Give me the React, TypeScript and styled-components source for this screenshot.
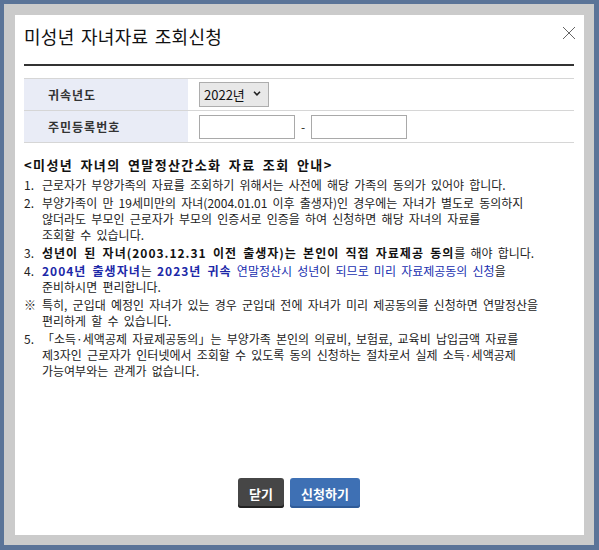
import styled, { createGlobalStyle } from "styled-components";

const GlobalStyle = createGlobalStyle`
    html, body {
        margin: 0;
        height: 100%;
    }
    body {
        background: #5b7498;
        font-family: "Noto Sans CJK KR", "Noto Sans", sans-serif;
        color: #222;
    }
    #root {
        height: 100%;
    }
    * {
        box-sizing: border-box;
    }
`;

const Screen = styled.div`
    height: 100%;
    padding: 4px 5px 5px 4px;
`;

const Frame = styled.div`
    height: 100%;
    background: #cbcbcb;
    padding: 11px 10px 10px 11px;
`;

const Panel = styled.div`
    height: 100%;
    background: #fff;
    display: flex;
    flex-direction: column;
    padding: 0 10px 27px 9px;
`;

const Header = styled.div`
    display: flex;
    align-items: center;
    justify-content: space-between;
    height: 51px;
    padding-bottom: 7px;
    border-bottom: 2px solid #333;
`;

const Title = styled.h1`
    margin: 0;
    font-size: 18px;
    font-weight: 400;
    color: #111;
    letter-spacing: 0.3px;
    word-spacing: 2px;
`;

const CloseButton = styled.button`
    background: none;
    border: none;
    padding: 0;
    margin-right: -2px;
    width: 14px;
    height: 14px;
    cursor: pointer;
    display: flex;
    margin-top: -6px;
`;

const Table = styled.div`
    margin-top: 12px;
    border-top: 1px solid #d6d6d6;
`;

const Row = styled.div`
    display: grid;
    grid-template-columns: 164px 1fr;
    height: 32px;
    border-bottom: 1px solid #d6d6d6;
`;

const Label = styled.div`
    background: #e9ecf6;
    display: flex;
    align-items: center;
    padding-left: 24px;
    font-size: 12px;
    font-weight: 700;
    letter-spacing: 1px;
    color: #333;
`;

const Cell = styled.div`
    display: flex;
    align-items: center;
    gap: 6px;
    padding-left: 11px;
    font-size: 12px;
`;

const SelectBox = styled.div`
    position: relative;
    width: 70px;
    height: 25px;
`;

const Select = styled.select`
    appearance: none;
    width: 100%;
    height: 100%;
    border: 1px solid #adadad;
    background: #e8e8e8;
    font-family: inherit;
    font-size: 13px;
    color: #111;
    padding: 0 0 0 4px;
    border-radius: 0;
`;

const Chevron = styled.span`
    position: absolute;
    right: 8px;
    top: 9px;
    pointer-events: none;
    display: flex;
`;

const Input = styled.input`
    width: 96px;
    height: 24px;
    border: 1px solid #a9a9a9;
    padding: 0 4px;
`;

const Notice = styled.div`
    margin-top: 14px;
    font-size: 12px;
    word-spacing: 2.5px;
`;

const NoticeTitle = styled.div`
    font-size: 13px;
    font-weight: 700;
    letter-spacing: 1.4px;
    word-spacing: 3px;
    color: #111;
    line-height: 16px;
`;

const List = styled.div`
    margin-top: 4px;
`;

const Item = styled.div`
    display: grid;
    grid-template-columns: 18px 1fr;
    line-height: 16px;
    margin-top: 2px;
    color: #222;
`;

const Strong = styled.b<{ $blue?: boolean }>`
    font-weight: 700;
    letter-spacing: 1px;
    color: ${(p) => (p.$blue ? "#1c28a8" : "#111")};
`;

const Blue = styled.span`
    color: #2030b0;
`;

const Footer = styled.div`
    margin-top: auto;
    display: flex;
    justify-content: center;
    gap: 6px;
`;

const Button = styled.button<{ $primary?: boolean }>`
    height: 30px;
    padding: 0 11px;
    border: none;
    border-radius: 3px;
    background: ${(p) => (p.$primary ? "#3e70b4" : "#464646")};
    box-shadow: inset 0 -2px 0 ${(p) => (p.$primary ? "#2f5b98" : "#222")};
    color: #fff;
    font-family: inherit;
    font-size: 13px;
    font-weight: 700;
    cursor: pointer;
`;

export default function App() {
    return (
        <>
            <GlobalStyle/>
            <Screen>
                <Frame>
                    <Panel>
                        <Header>
                            <Title>미성년 자녀자료 조회신청</Title>
                            <CloseButton aria-label="닫기">
                                <svg width="14" height="14" viewBox="0 0 14 14">
                                    <path d="M1 1 L13 13 M13 1 L1 13" stroke="#666" strokeWidth="1"/>
                                </svg>
                            </CloseButton>
                        </Header>

                        <Table>
                            <Row>
                                <Label>귀속년도</Label>
                                <Cell>
                                    <SelectBox>
                                        <Select defaultValue="2022">
                                            <option value="2022">2022년</option>
                                            <option value="2021">2021년</option>
                                        </Select>
                                        <Chevron>
                                            <svg width="8" height="5" viewBox="0 0 8 5">
                                                <path d="M1 0.8 L4 3.8 L7 0.8" stroke="#222" strokeWidth="1.6" fill="none"/>
                                            </svg>
                                        </Chevron>
                                    </SelectBox>
                                </Cell>
                            </Row>
                            <Row>
                                <Label>주민등록번호</Label>
                                <Cell>
                                    <Input/>
                                    -
                                    <Input/>
                                </Cell>
                            </Row>
                        </Table>

                        <Notice>
                            <NoticeTitle>&lt;미성년 자녀의 연말정산간소화 자료 조회 안내&gt;</NoticeTitle>
                            <List>
                                <Item>
                                    <span>1.</span>
                                    <span>근로자가 부양가족의 자료를 조회하기 위해서는 사전에 해당 가족의 동의가 있어야 합니다.</span>
                                </Item>
                                <Item>
                                    <span>2.</span>
                                    <span>부양가족이 만 19세미만의 자녀(2004.01.01 이후 출생자)인 경우에는 자녀가 별도로 동의하지<br/>않더라도 부모인 근로자가 부모의 인증서로 인증을 하여 신청하면 해당 자녀의 자료를<br/>조회할 수 있습니다.</span>
                                </Item>
                                <Item>
                                    <span>3.</span>
                                    <span><Strong>성년이 된 자녀(2003.12.31 이전 출생자)는 본인이 직접 자료제공 동의</Strong>를 해야 합니다.</span>
                                </Item>
                                <Item>
                                    <span>4.</span>
                                    <span><Strong $blue>2004년 출생자녀</Strong>는 <Strong $blue>2023년 귀속</Strong> <Blue>연말정산시 성년</Blue>이 <Blue>되므로 미리 자료제공동의 신청</Blue>을<br/>준비하시면 편리합니다.</span>
                                </Item>
                                <Item>
                                    <span>※</span>
                                    <span>특히, 군입대 예정인 자녀가 있는 경우 군입대 전에 자녀가 미리 제공동의를 신청하면 연말정산을<br/>편리하게 할 수 있습니다.</span>
                                </Item>
                                <Item>
                                    <span>5.</span>
                                    <span>「소득·세액공제 자료제공동의」는 부양가족 본인의 의료비, 보험료, 교육비 납입금액 자료를<br/>제3자인 근로자가 인터넷에서 조회할 수 있도록 동의 신청하는 절차로서 실제 소득·세액공제<br/>가능여부와는 관계가 없습니다.</span>
                                </Item>
                            </List>
                        </Notice>

                        <Footer>
                            <Button>닫기</Button>
                            <Button $primary>신청하기</Button>
                        </Footer>
                    </Panel>
                </Frame>
            </Screen>
        </>
    );
}
